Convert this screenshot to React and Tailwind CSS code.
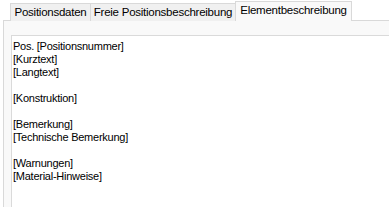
import React from 'react';

const tabs = [
  { label: 'Positionsdaten', w: 'w-[80px]' },
  { label: 'Freie Positionsbeschreibung', w: 'w-[145px]' },
];

const lines = [
  'Pos. [Positionsnummer]',
  '[Kurztext]',
  '[Langtext]',
  '',
  '[Konstruktion]',
  '',
  '[Bemerkung]',
  '[Technische Bemerkung]',
  '',
  '[Warnungen]',
  '[Material-Hinweise]',
];

export default function App() {
  return (
    <div className="w-[389px] h-[207px] overflow-hidden bg-white pl-[3px] pt-[1px] flex flex-col" style={{ fontFamily: '"Liberation Sans", Arial, sans-serif' }}>
      <div className="flex items-end h-[20px] shrink-0">
        <div className="w-[7px] h-full border-b border-[#d9d9d9]" />
        {tabs.map((t) => (
          <div
            key={t.label}
            className={`${t.w} h-[18px] border border-b-0 border-r-0 border-[#d9d9d9] bg-[#f0f0f0] text-[11.5px] tracking-[-0.25px] text-black flex items-center justify-center leading-none whitespace-nowrap pt-[1px]`}
          >
            {t.label}
          </div>
        ))}
        <div className="w-[117px] h-[20px] border border-b-0 border-[#d9d9d9] bg-[#f9f9f9] text-[11.5px] tracking-[-0.25px] text-black flex items-center justify-center leading-none pb-[2px] whitespace-nowrap">
          Elementbeschreibung
        </div>
        <div className="flex-1 h-full border-b border-[#d9d9d9]" />
      </div>
      <div className="flex-1 border-l border-[#d9d9d9] bg-[#f9f9f9] pt-[14px] pl-[7px] flex">
        <div className="flex-1 bg-white border-l border-t border-[#dadada] pl-[1px] pt-[4px] text-[11px] tracking-[-0.25px] leading-[13px] text-black">
          {lines.map((l, i) => (
            <div key={i} className="h-[13px] whitespace-pre">{l || ' '}</div>
          ))}
        </div>
      </div>
    </div>
  );
}
